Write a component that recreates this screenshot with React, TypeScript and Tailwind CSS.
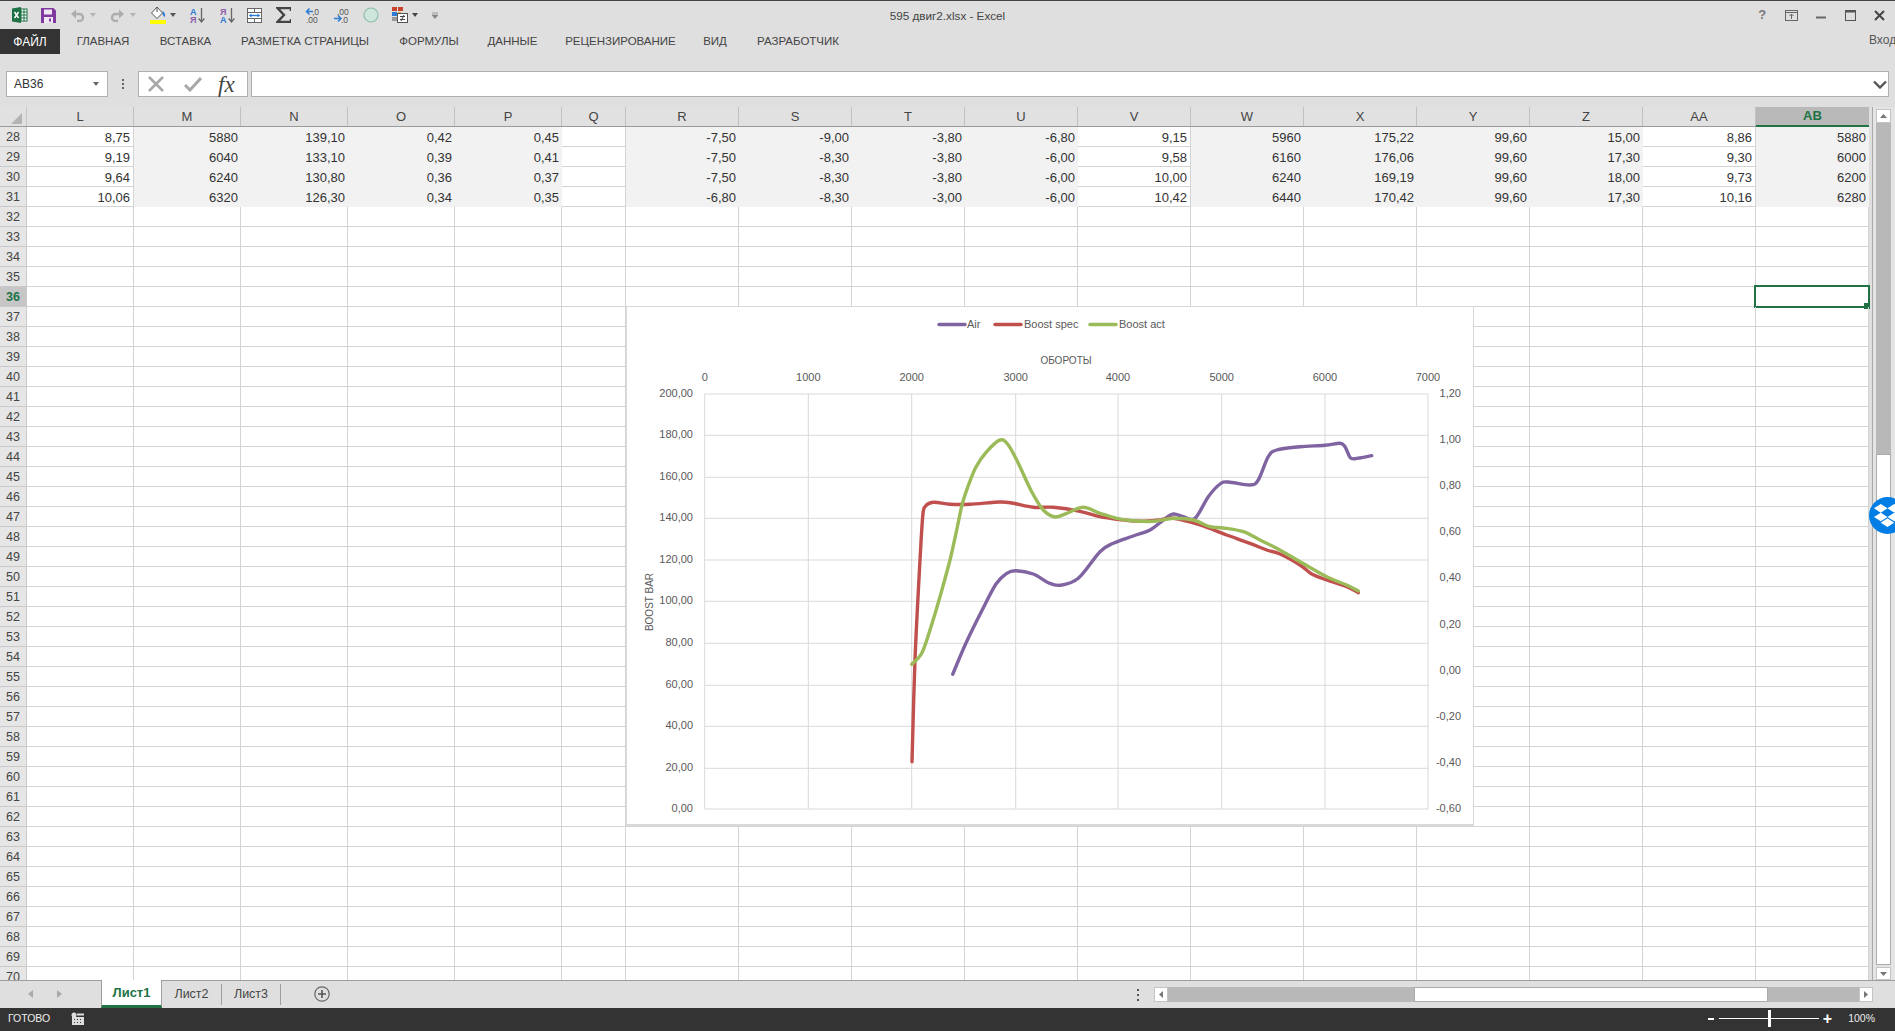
import React from 'react';
import { FaDropbox } from 'react-icons/fa';

const FONT = '"Liberation Sans", Arial, sans-serif';

const COLUMNS = [
  { name: 'L', w: 'w-[107px]', plain: true },
  { name: 'M', w: 'w-[107px]' },
  { name: 'N', w: 'w-[107px]' },
  { name: 'O', w: 'w-[107px]' },
  { name: 'P', w: 'w-[107px]' },
  { name: 'Q', w: 'w-[64px]', plain: true },
  { name: 'R', w: 'w-[113px]' },
  { name: 'S', w: 'w-[113px]' },
  { name: 'T', w: 'w-[113px]' },
  { name: 'U', w: 'w-[113px]' },
  { name: 'V', w: 'w-[113px]', plain: true },
  { name: 'W', w: 'w-[113px]' },
  { name: 'X', w: 'w-[113px]' },
  { name: 'Y', w: 'w-[113px]' },
  { name: 'Z', w: 'w-[113px]' },
  { name: 'AA', w: 'w-[113px]', plain: true },
  { name: 'AB', w: 'w-[113px]' },
];

const DATA: Record<number, string[]> = {
  28: ['8,75', '5880', '139,10', '0,42', '0,45', '', '-7,50', '-9,00', '-3,80', '-6,80', '9,15', '5960', '175,22', '99,60', '15,00', '8,86', '5880'],
  29: ['9,19', '6040', '133,10', '0,39', '0,41', '', '-7,50', '-8,30', '-3,80', '-6,00', '9,58', '6160', '176,06', '99,60', '17,30', '9,30', '6000'],
  30: ['9,64', '6240', '130,80', '0,36', '0,37', '', '-7,50', '-8,30', '-3,80', '-6,00', '10,00', '6240', '169,19', '99,60', '18,00', '9,73', '6200'],
  31: ['10,06', '6320', '126,30', '0,34', '0,35', '', '-6,80', '-8,30', '-3,00', '-6,00', '10,42', '6440', '170,42', '99,60', '17,30', '10,16', '6280'],
};

const ROWS = Array.from({ length: 43 }, (_, i) => i + 28);

const TABS = [
  { label: 'ГЛАВНАЯ', w: 'w-[86px]' },
  { label: 'ВСТАВКА', w: 'w-[79px]' },
  { label: 'РАЗМЕТКА СТРАНИЦЫ', w: 'w-[160px]' },
  { label: 'ФОРМУЛЫ', w: 'w-[88px]' },
  { label: 'ДАННЫЕ', w: 'w-[79px]' },
  { label: 'РЕЦЕНЗИРОВАНИЕ', w: 'w-[137px]' },
  { label: 'ВИД', w: 'w-[52px]' },
  { label: 'РАЗРАБОТЧИК', w: 'w-[114px]' },
];

// curve points traced from the chart, in page pixels
const AIR: number[][] = [[952.7, 674.3], [966, 643], [981.7, 611], [996, 584], [1006.7, 573.3], [1015.7, 570.7], [1033.3, 574], [1048.3, 582.7], [1060, 585.3], [1078.3, 578.3], [1100, 551.7], [1113.3, 543.3], [1133.3, 536], [1150, 530], [1163.3, 520], [1173.3, 514], [1183.3, 516.7], [1195, 518.3], [1208.3, 496.7], [1220, 484], [1228.3, 482], [1250, 485], [1258.3, 480], [1268.3, 456.7], [1276.7, 450], [1300, 446.7], [1325, 445.3], [1340, 443.3], [1345, 446.7], [1350, 457.3], [1355, 458.7], [1371.7, 455.7]];
const SPEC: number[][] = [[912, 761.7], [915, 660], [920, 560], [922.7, 516.7], [925, 506.7], [933.3, 502.3], [950, 504.3], [970, 504.3], [1000, 502], [1013.3, 503.3], [1033.3, 507.3], [1053.3, 507.3], [1080, 511.3], [1100, 516.7], [1116.7, 519.3], [1140, 521.3], [1160, 520], [1173.3, 518.3], [1200, 525], [1226.7, 535], [1250, 543.3], [1266.7, 550], [1280, 554], [1300, 565], [1311.7, 574], [1326.7, 580], [1346.7, 586.7], [1358.3, 592.7]];
const ACT: number[][] = [[911.7, 664.3], [921.7, 653.3], [930, 630], [940, 596.7], [950, 560], [956.7, 530], [962.5, 503], [968.5, 485], [976, 467], [986.7, 451.7], [1000, 440], [1008.3, 445], [1018.3, 463.3], [1031.7, 491.7], [1043.3, 510], [1055, 517], [1066.7, 513.3], [1083.3, 507.3], [1100, 513.3], [1116.7, 518.3], [1133.3, 520.7], [1153.3, 521.3], [1173.3, 518.3], [1193.3, 520], [1210, 526.7], [1223.3, 528], [1243.3, 531.7], [1260, 540], [1276.7, 548.3], [1300, 561.7], [1326.7, 576.7], [1346.7, 585], [1358.3, 591]];

function smooth(pts: number[][]) {
  let d = `M${pts[0][0]} ${pts[0][1]}`;
  for (let i = 0; i < pts.length - 1; i++) {
    const p0 = pts[i - 1] || pts[i];
    const p1 = pts[i];
    const p2 = pts[i + 1];
    const p3 = pts[i + 2] || p2;
    const c1x = p1[0] + (p2[0] - p0[0]) / 6;
    const c1y = p1[1] + (p2[1] - p0[1]) / 6;
    const c2x = p2[0] - (p3[0] - p1[0]) / 6;
    const c2y = p2[1] - (p3[1] - p1[1]) / 6;
    d += ` C${c1x.toFixed(1)} ${c1y.toFixed(1)} ${c2x.toFixed(1)} ${c2y.toFixed(1)} ${p2[0]} ${p2[1]}`;
  }
  return d;
}

const Caret = ({ className = 'ml-[5px]', color = '#777' }: { className?: string; color?: string }) => (
  <svg width="6" height="4" viewBox="0 0 6 4" className={className}><path d="M0 0h6L3 4z" fill={color} /></svg>
);

const ExcelIcon = () => (
  <svg width="16" height="16" viewBox="0 0 16 16" className="ml-[12px]">
    <rect x="5" y="2" width="10" height="12" fill="#fff" stroke="#1e7145" />
    <path d="M9 2v12M12 2v12M5 5h10M5 8h10M5 11h10" stroke="#1e7145" strokeWidth="1" />
    <path d="M0 1.5 9 0v16l-9-1.5z" fill="#1e7145" />
    <path d="M2.5 5 6.5 11M6.5 5 2.5 11" stroke="#fff" strokeWidth="1.5" />
  </svg>
);

const SaveIcon = () => (
  <svg width="15" height="15" viewBox="0 0 15 15" className="ml-[13px]">
    <path d="M0 0h12.5L15 2.5V15H0z" fill="#80399e" />
    <rect x="3" y="1.5" width="8" height="5" fill="#efe7f3" />
    <rect x="3" y="9" width="9" height="6" fill="#efe7f3" />
    <rect x="8" y="10.5" width="2" height="3" fill="#80399e" />
  </svg>
);

const UndoIcon = ({ flip }: { flip?: boolean }) => (
  <svg width="15" height="13" viewBox="0 0 15 13" className={flip ? '-scale-x-100' : ''}>
    <path d="M3 5h6.5a3.5 3.5 0 0 1 0 7H7" fill="none" stroke="#adadad" strokeWidth="2.4" />
    <path d="M6 0.5 1 5l5 4.5z" fill="#adadad" />
  </svg>
);

const BucketIcon = () => (
  <svg width="16" height="18" viewBox="0 0 16 18" className="ml-[14px]">
    <path d="M7 1 1.5 7 7 12.5 12.5 7z" fill="#fff" stroke="#555" strokeWidth="1" />
    <path d="M7 1V6" stroke="#555" />
    <path d="M12.5 5c2 1 3 3 2.5 6-1.5-.5-2-2-2.5-3z" fill="#2b7cd3" />
    <rect x="0" y="14" width="16" height="4" fill="#ffff00" />
  </svg>
);

const SortIcon = ({ top, bottom, topColor, bottomColor, className }: { top: string; bottom: string; topColor: string; bottomColor: string; className: string }) => (
  <svg width="15" height="17" viewBox="0 0 15 17" className={className}>
    <text x="0" y="7.5" fontSize="9" fontWeight="700" fontFamily={FONT} fill={topColor}>{top}</text>
    <text x="0" y="16" fontSize="9" fontWeight="700" fontFamily={FONT} fill={bottomColor}>{bottom}</text>
    <path d="M11.5 1v13M8.7 11.5l2.8 3.5 2.8-3.5" fill="none" stroke="#666" strokeWidth="1.3" />
  </svg>
);

const JustifyIcon = () => (
  <svg width="15" height="15" viewBox="0 0 15 15" className="ml-[12px]">
    <rect x="0.5" y="0.5" width="14" height="14" fill="#fff" stroke="#666" />
    <path d="M0 4.5h15M0 10.5h15M7.5 0v4.5M7.5 10.5V15" stroke="#666" />
    <path d="M2.5 7.5h10" stroke="#2b7cd3" strokeWidth="1.4" />
    <path d="M4.5 5.5 2 7.5l2.5 2zM10.5 5.5l2.5 2-2.5 2z" fill="#2b7cd3" />
  </svg>
);

const SigmaIcon = () => (
  <svg width="15" height="16" viewBox="0 0 15 16" className="ml-[14px]">
    <path d="M15 4V1H1.5L8 8l-6.5 7H15v-3" fill="none" stroke="#444" strokeWidth="2.4" />
  </svg>
);

const DecimalIcon = ({ up }: { up?: boolean }) => (
  <svg width="15" height="16" viewBox="0 0 15 16" className="ml-[14px]">
    <text x={up ? 7 : 3} y="7.5" fontSize="8.5" fontFamily={FONT} fill="#555">{up ? ',0' : ',00'}</text>
    <text x={up ? 1 : 7} y="15.5" fontSize="8.5" fontFamily={FONT} fill="#555">{up ? ',00' : ',0'}</text>
    {up ? (
      <path d="M8 4.5H2M4.5 1.5l-3 3 3 3" fill="none" stroke="#2b7cd3" strokeWidth="1.5" />
    ) : (
      <path d="M0 11.5h6.5M4 8.5l3 3-3 3" fill="none" stroke="#2b7cd3" strokeWidth="1.5" />
    )}
  </svg>
);

const CondFormatIcon = () => (
  <svg width="16" height="16" viewBox="0 0 16 16" className="ml-[13px]">
    <rect x="0" y="0" width="5" height="4" fill="#c9432c" />
    <rect x="6" y="0" width="5" height="4" fill="#c9432c" />
    <rect x="0" y="5" width="5" height="4" fill="#2b7cd3" />
    <rect x="6" y="5" width="3" height="4" fill="#e3a33b" />
    <rect x="0" y="10" width="5" height="4" fill="#9a9a9a" />
    <rect x="5.5" y="6.5" width="10" height="9" fill="#fff" stroke="#555" />
    <path d="M8 9.5h5M8 12.5h5M12 8 9 14" stroke="#444" fill="none" />
  </svg>
);

const WindowControl = ({ children }: { children: React.ReactNode }) => (
  <div className="w-[29.3px] flex items-center justify-center">{children}</div>
);

function TitleBar() {
  return (
    <div className="h-[29px] border-t border-[#444] grid grid-cols-[1fr_auto_1fr] items-center">
      <div className="flex items-center">
        <ExcelIcon />
        <SaveIcon />
        <div className="ml-[14px]"><UndoIcon /></div>
        <Caret color="#b5b5b5" />
        <div className="ml-[14px]"><UndoIcon flip /></div>
        <Caret color="#b5b5b5" />
        <BucketIcon />
        <Caret className="ml-[4px]" color="#555" />
        <SortIcon top="A" bottom="Я" topColor="#2b7cd3" bottomColor="#8a5ba8" className="ml-[14px]" />
        <SortIcon top="Я" bottom="A" topColor="#8a5ba8" bottomColor="#2b7cd3" className="ml-[15px]" />
        <JustifyIcon />
        <SigmaIcon />
        <DecimalIcon up />
        <DecimalIcon />
        <svg width="16" height="16" viewBox="0 0 16 16" className="ml-[14px]">
          <circle cx="8" cy="8" r="7" fill="#cfe6dc" stroke="#8dbfa8" strokeWidth="1.2" />
        </svg>
        <CondFormatIcon />
        <Caret className="ml-[4px]" color="#444" />
        <svg width="6" height="7" viewBox="0 0 6 7" className="ml-[14px]"><path d="M0 1h6M0 3h6L3 6.5 0 3" fill="#888" stroke="#888" strokeWidth="0.8" /></svg>
      </div>
      <div className="text-[11.7px] text-[#444] pt-[2px]">595 двиг2.xlsx - Excel</div>
      <div className="flex justify-end pr-[1px]">
        <WindowControl><span className="text-[13px] font-bold text-[#777]">?</span></WindowControl>
        <WindowControl>
          <svg width="13" height="11" viewBox="0 0 13 11"><rect x="0.5" y="0.5" width="12" height="10" fill="none" stroke="#666" /><path d="M0 2.5h13M6.5 9V4M4.5 6l2-2 2 2" fill="none" stroke="#666" /></svg>
        </WindowControl>
        <WindowControl>
          <svg width="10" height="10" viewBox="0 0 10 10"><path d="M0 7.5h10" stroke="#666" strokeWidth="2" /></svg>
        </WindowControl>
        <WindowControl>
          <svg width="11" height="11" viewBox="0 0 11 11"><rect x="0.5" y="0.5" width="10" height="10" fill="none" stroke="#555" /><path d="M0 1.5h11" stroke="#555" strokeWidth="2" /></svg>
        </WindowControl>
        <WindowControl>
          <svg width="11" height="11" viewBox="0 0 11 11"><path d="M1 1l9 9M10 1l-9 9" stroke="#444" strokeWidth="2" /></svg>
        </WindowControl>
      </div>
    </div>
  );
}

function RibbonTabs() {
  return (
    <div className="h-[25px] flex items-stretch">
      <div className="w-[60px] bg-[#333] text-white text-[12px] flex items-center justify-center">ФАЙЛ</div>
      {TABS.map(t => (
        <div key={t.label} className={`${t.w} text-[11.5px] text-[#444] flex items-center justify-center whitespace-nowrap`}>{t.label}</div>
      ))}
      <div className="ml-auto w-[26px] overflow-hidden whitespace-nowrap text-[12px] text-[#555] pt-[2px]">Вход</div>
    </div>
  );
}

function FormulaBar() {
  return (
    <div className="h-[53px] pt-[17px] pl-[6px] flex items-start">
      <div className="w-[102px] h-[26px] bg-white border border-[#b0b0b0] flex items-center justify-between pl-[7px] pr-[8px]">
        <span className="text-[12px] text-[#333]">AB36</span>
        <Caret className="" color="#666" />
      </div>
      <div className="w-[30px] h-[26px] flex flex-col items-center justify-center gap-[2px]">
        <div className="w-[2px] h-[2px] bg-[#666]" />
        <div className="w-[2px] h-[2px] bg-[#666]" />
        <div className="w-[2px] h-[2px] bg-[#666]" />
      </div>
      <div className="w-[110px] h-[26px] bg-white border border-[#b0b0b0] flex items-center pl-[9px]">
        <svg width="16" height="16" viewBox="0 0 16 16"><path d="M1 1l14 14M15 1 1 15" stroke="#a8a8a8" strokeWidth="2.6" /></svg>
        <svg width="18" height="16" viewBox="0 0 18 16" className="ml-[20px]"><path d="M1 9l5 5L17 2" fill="none" stroke="#a8a8a8" strokeWidth="3" /></svg>
        <span className="ml-[16px] text-[23px] italic text-[#444] leading-none" style={{ fontFamily: '"Liberation Serif", serif' }}>fx</span>
      </div>
      <div className="ml-[3px] w-[1638px] h-[26px] bg-white border border-[#b0b0b0] flex items-center justify-end pr-[1px]">
        <svg width="14" height="9" viewBox="0 0 14 9"><path d="M1 1.5l6 6 6-6" fill="none" stroke="#555" strokeWidth="2.4" /></svg>
      </div>
    </div>
  );
}

function ColumnHeader() {
  return (
    <div className="h-[20px] flex bg-[#e1e1e1] border-b border-[#9a9a9a]">
      <div className="w-[27px] flex items-end justify-end pr-[4px] pb-[2px] border-r border-[#c6c6c6]">
        <svg width="11" height="11" viewBox="0 0 11 11"><path d="M11 0v11H0z" fill="#b4b4b4" /></svg>
      </div>
      {COLUMNS.map(c =>
        c.name === 'AB' ? (
          <div key={c.name} className={`${c.w} -mb-px bg-[#b9b9b9] border-b-2 border-[#217346] text-[13px] font-bold text-[#217346] flex items-center justify-center`}>{c.name}</div>
        ) : (
          <div key={c.name} className={`${c.w} border-r border-[#c0c0c0] text-[13px] text-[#444] flex items-center justify-center`}>{c.name}</div>
        ),
      )}
    </div>
  );
}

function Row({ n }: { n: number }) {
  const values = DATA[n];
  const selected = n === 36;
  return (
    <div className="h-[20px] flex shrink-0">
      <div className={`w-[27px] pt-px border-r border-b border-[#c9c9c9] text-[12.5px] flex items-center justify-center ${selected ? 'bg-[#c6c6c6] text-[#217346] font-bold' : 'bg-[#e6e6e6] text-[#444]'}`}>{n}</div>
      {COLUMNS.map((c, i) => {
        const shaded = values && !c.plain;
        return (
          <div
            key={c.name}
            className={`${c.w} relative pr-[3px] text-right text-[13px] leading-[21px] text-[#333] ${shaded ? 'bg-[#f2f2f2]' : 'border-r border-b border-[#d4d4d4]'}`}
          >
            {values ? values[i] : ''}
            {selected && c.name === 'AB' && (
              <div className="absolute -left-[2px] -top-[2px] w-[116px] h-[23px] border-2 border-[#217346]">
                <div className="absolute -right-[2px] -bottom-[3px] w-[6px] h-[6px] bg-[#217346]" />
              </div>
            )}
          </div>
        );
      })}
    </div>
  );
}

function Chart() {
  const gridX = [704.7, 808.3, 911.7, 1015.7, 1118, 1221.7, 1325, 1428];
  const gridY = [394, 435.3, 477.3, 518.3, 560, 601.3, 643.3, 685.3, 726.3, 768.3, 809];
  const left = ['200,00', '180,00', '160,00', '140,00', '120,00', '100,00', '80,00', '60,00', '40,00', '20,00', '0,00'];
  const right = ['1,20', '1,00', '0,80', '0,60', '0,40', '0,20', '0,00', '-0,20', '-0,40', '-0,60'];
  const label = { fontFamily: FONT, fontSize: 11, fill: '#595959' };
  const title = { fontFamily: FONT, fontSize: 10, fill: '#595959' };
  return (
    <div className="absolute left-[626px] top-[199px] w-[848px] h-[520px] bg-white border border-[#d9d9d9] border-b-2">
      <svg width="848" height="519" viewBox="626 306 848 519" className="block -m-px">
        {gridX.map(x => <path key={x} d={`M${x} 394V809`} stroke="#d9d9d9" strokeWidth="1" />)}
        {gridY.map(y => <path key={y} d={`M704.7 ${y}H1428`} stroke="#d9d9d9" strokeWidth="1" />)}
        {gridX.map((x, i) => (
          <text key={x} x={x} y="381" textAnchor="middle" {...label}>{i * 1000}</text>
        ))}
        {gridY.map((y, i) => (
          <text key={y} x="693" y={y + 3} textAnchor="end" {...label}>{left[i]}</text>
        ))}
        {right.map((t, i) => (
          <text key={t} x="1461" y={397 + i * 46.1} textAnchor="end" {...label}>{t}</text>
        ))}
        <text x="1066" y="364" textAnchor="middle" {...title}>ОБОРОТЫ</text>
        <text transform="translate(652.5 602) rotate(-90)" textAnchor="middle" {...title}>BOOST BAR</text>

        <path d="M939 324.5h26" stroke="#8064a2" strokeWidth="3.5" strokeLinecap="round" />
        <text x="967" y="328" {...label}>Air</text>
        <path d="M995 324.5h26" stroke="#c0504d" strokeWidth="3.5" strokeLinecap="round" />
        <text x="1024" y="328" {...label}>Boost spec</text>
        <path d="M1090 324.5h26" stroke="#9bbb59" strokeWidth="3.5" strokeLinecap="round" />
        <text x="1119" y="328" {...label}>Boost act</text>

        <path d={smooth(AIR)} fill="none" stroke="#8064a2" strokeWidth="3.4" strokeLinecap="round" strokeLinejoin="round" />
        <path d={smooth(SPEC)} fill="none" stroke="#c0504d" strokeWidth="3.4" strokeLinecap="round" strokeLinejoin="round" />
        <path d={smooth(ACT)} fill="none" stroke="#9bbb59" strokeWidth="3.4" strokeLinecap="round" strokeLinejoin="round" />
      </svg>
    </div>
  );
}

function VerticalScroll() {
  return (
    <div className="flex-1 bg-[#e4e4e4] border-l border-[#a8a8a8] ml-[3px] pl-[3px] flex flex-col">
      <div className="h-[2px]" />
      <div className="w-[15px] h-[14px] bg-white border border-[#c4c4c4] flex items-center justify-center">
        <svg width="7" height="4" viewBox="0 0 7 4"><path d="M0 4h7L3.5 0z" fill="#777" /></svg>
      </div>
      <div className="w-[15px] h-[331px] bg-[#b8b8b8]" />
      <div className="w-[15px] h-[511px] bg-white border border-[#ababab]" />
      <div className="h-[2px]" />
      <div className="w-[15px] h-[13px] bg-white border border-[#c4c4c4] flex items-center justify-center">
        <svg width="7" height="4" viewBox="0 0 7 4"><path d="M0 0h7L3.5 4z" fill="#777" /></svg>
      </div>
    </div>
  );
}

function SheetBar() {
  return (
    <div className="h-[28px] bg-[#dfdfdf] border-t border-[#9e9e9e] flex items-stretch">
      <svg width="5" height="8" viewBox="0 0 5 8" className="ml-[28px] mt-[9px]"><path d="M5 0v8L0 4z" fill="#a9a9a9" /></svg>
      <svg width="5" height="8" viewBox="0 0 5 8" className="ml-[24px] mt-[9px]"><path d="M0 0v8l5-4z" fill="#a9a9a9" /></svg>
      <div className="ml-[39px] -mt-px w-[61px] bg-white border-x border-[#9e9e9e] border-b-[3px] border-b-[#217346] text-[13px] font-bold text-[#217346] flex items-center justify-center">Лист1</div>
      <div className="w-[60px] my-[3px] border-r border-[#9e9e9e] text-[12.5px] text-[#444] flex items-center justify-center">Лист2</div>
      <div className="w-[59px] my-[3px] border-r border-[#9e9e9e] text-[12.5px] text-[#444] flex items-center justify-center">Лист3</div>
      <svg width="16" height="16" viewBox="0 0 16 16" className="ml-[33px] mt-[5px]">
        <circle cx="8" cy="8" r="7.2" fill="none" stroke="#666" strokeWidth="1.2" />
        <path d="M8 4v8M4 8h8" stroke="#555" strokeWidth="1.6" />
      </svg>
      <div className="ml-[807px] my-auto flex flex-col gap-[3px]">
        <div className="w-[2px] h-[2px] bg-[#555]" />
        <div className="w-[2px] h-[2px] bg-[#555]" />
        <div className="w-[2px] h-[2px] bg-[#555]" />
      </div>
      <div className="ml-[15px] mt-[6px] h-[15px] flex">
        <div className="w-[14px] bg-white border border-[#c4c4c4] flex items-center justify-center">
          <svg width="4" height="7" viewBox="0 0 4 7"><path d="M4 0v7L0 3.5z" fill="#777" /></svg>
        </div>
        <div className="w-[246px] bg-[#b8b8b8]" />
        <div className="w-[354px] bg-white border border-[#ababab]" />
        <div className="w-[91px] bg-[#b8b8b8]" />
        <div className="w-[14px] bg-white border border-[#c4c4c4] flex items-center justify-center">
          <svg width="4" height="7" viewBox="0 0 4 7"><path d="M0 0v7l4-3.5z" fill="#777" /></svg>
        </div>
      </div>
    </div>
  );
}

function StatusBar() {
  return (
    <div className="h-[23px] pb-[2px] bg-[#333] text-[#eee] flex items-center">
      <span className="ml-[8px] text-[10.5px]">ГОТОВО</span>
      <svg width="13" height="13" viewBox="0 0 13 13" className="ml-[21px]">
        <circle cx="3" cy="3" r="2.5" fill="#ddd" />
        <rect x="1" y="5" width="12" height="8" fill="#ddd" />
        <rect x="6" y="1.5" width="7" height="2" fill="#ddd" />
        <path d="M3 7.5h1M6 7.5h1M9 7.5h1M3 10.5h1M6 10.5h1M9 10.5h1" stroke="#333" />
      </svg>
      <div className="ml-auto flex items-center mr-[20px]">
        <div className="w-[6px] h-[2px] bg-white" />
        <div className="ml-[5px] relative w-[100px] h-px bg-white">
          <div className="absolute left-[49px] -top-[8px] w-[3px] h-[17px] bg-white" />
        </div>
        <div className="ml-[4px] text-[16px] font-bold leading-none text-white">+</div>
        <span className="ml-[16px] text-[10.5px]">100%</span>
      </div>
    </div>
  );
}

export default function App() {
  return (
    <div className="relative w-[1895px] h-[1031px] overflow-hidden bg-[#dfdfdf] flex flex-col" style={{ fontFamily: FONT }}>
      <TitleBar />
      <RibbonTabs />
      <FormulaBar />
      <div className="h-[873px] flex overflow-hidden">
        <div className="w-[1869px] relative bg-white flex flex-col">
          <ColumnHeader />
          {ROWS.map(n => <Row key={n} n={n} />)}
          <Chart />
        </div>
        <VerticalScroll />
      </div>
      <SheetBar />
      <StatusBar />
      <div className="absolute left-[1869px] top-[497px] w-[37px] h-[37px] rounded-full bg-[#007ee5] flex items-center justify-center text-white">
        <FaDropbox size={27} />
      </div>
    </div>
  );
}
